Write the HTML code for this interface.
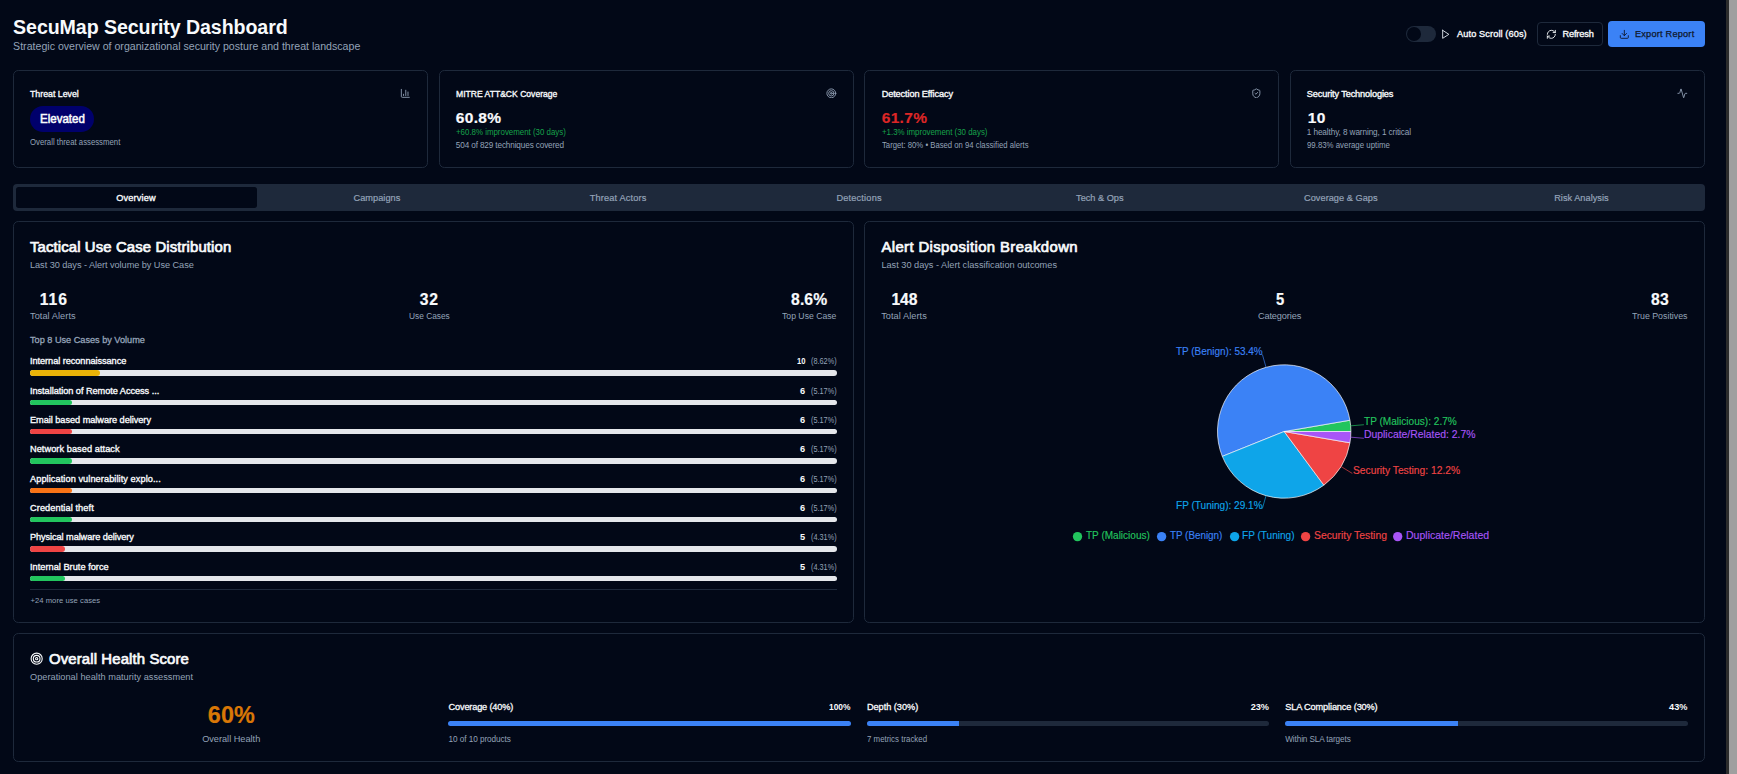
<!DOCTYPE html>
<html><head><meta charset="utf-8"><title>SecuMap Security Dashboard</title>
<style>html,body{margin:0;padding:0}body{width:1737px;height:774px;background:#020817;overflow:hidden;position:relative;font-family:"Liberation Sans",sans-serif;}.t{position:absolute;white-space:pre;}</style></head>
<body>
<div style="position:absolute;box-sizing:border-box;border:1px solid #1e293b;border-radius:5.3px;left:13px;top:70px;width:415px;height:98px"></div>
<div style="position:absolute;box-sizing:border-box;border:1px solid #1e293b;border-radius:5.3px;left:439px;top:70px;width:415px;height:98px"></div>
<div style="position:absolute;box-sizing:border-box;border:1px solid #1e293b;border-radius:5.3px;left:864px;top:70px;width:415px;height:98px"></div>
<div style="position:absolute;box-sizing:border-box;border:1px solid #1e293b;border-radius:5.3px;left:1290px;top:70px;width:415px;height:98px"></div>
<div style="position:absolute;left:13px;top:184px;width:1692px;height:27px;background:#1e293b;border-radius:4px"></div>
<div style="position:absolute;left:16px;top:187px;width:241px;height:21px;background:#020817;border-radius:2.7px"></div>
<div style="position:absolute;box-sizing:border-box;border:1px solid #1e293b;border-radius:5.3px;left:13px;top:221px;width:841px;height:402px"></div>
<div style="position:absolute;box-sizing:border-box;border:1px solid #1e293b;border-radius:5.3px;left:864px;top:221px;width:841px;height:402px"></div>
<div style="position:absolute;box-sizing:border-box;border:1px solid #1e293b;border-radius:5.3px;left:13px;top:633px;width:1692px;height:129px"></div>
<div style="position:absolute;left:1726px;top:0;width:11px;height:774px;background:#2c2c2c"></div>
<div style="position:absolute;left:1729px;top:0;width:8px;height:774px;background:#9f9f9f"></div>
<div style="position:absolute;left:1406px;top:26px;width:29.8px;height:16px;border-radius:8px;background:#1e293b"></div>
<div style="position:absolute;left:1407px;top:27px;width:14px;height:14px;border-radius:7px;background:#020817"></div>
<div style="position:absolute;box-sizing:border-box;left:1537px;top:22px;width:66px;height:24px;border:1px solid #1e293b;border-radius:4px"></div>
<div style="position:absolute;left:1608px;top:21px;width:97px;height:26px;border-radius:4px;background:#3b82f6"></div>
<div style="position:absolute;left:30px;top:106px;width:64px;height:26px;border-radius:13px;background:#00006b"></div>
<div style="position:absolute;left:30px;top:370.30px;width:807px;height:5.33px;border-radius:3px;background:#e5e7eb"></div>
<div style="position:absolute;left:30px;top:370.30px;width:69.6px;height:5.33px;border-radius:3px;background:#eab308"></div>
<div style="position:absolute;left:30px;top:399.63px;width:807px;height:5.33px;border-radius:3px;background:#e5e7eb"></div>
<div style="position:absolute;left:30px;top:399.63px;width:41.7px;height:5.33px;border-radius:3px;background:#22c55e"></div>
<div style="position:absolute;left:30px;top:428.97px;width:807px;height:5.33px;border-radius:3px;background:#e5e7eb"></div>
<div style="position:absolute;left:30px;top:428.97px;width:41.7px;height:5.33px;border-radius:3px;background:#ef4444"></div>
<div style="position:absolute;left:30px;top:458.30px;width:807px;height:5.33px;border-radius:3px;background:#e5e7eb"></div>
<div style="position:absolute;left:30px;top:458.30px;width:41.7px;height:5.33px;border-radius:3px;background:#22c55e"></div>
<div style="position:absolute;left:30px;top:487.63px;width:807px;height:5.33px;border-radius:3px;background:#e5e7eb"></div>
<div style="position:absolute;left:30px;top:487.63px;width:41.7px;height:5.33px;border-radius:3px;background:#f97316"></div>
<div style="position:absolute;left:30px;top:516.97px;width:807px;height:5.33px;border-radius:3px;background:#e5e7eb"></div>
<div style="position:absolute;left:30px;top:516.97px;width:41.7px;height:5.33px;border-radius:3px;background:#22c55e"></div>
<div style="position:absolute;left:30px;top:546.30px;width:807px;height:5.33px;border-radius:3px;background:#e5e7eb"></div>
<div style="position:absolute;left:30px;top:546.30px;width:34.8px;height:5.33px;border-radius:3px;background:#ef4444"></div>
<div style="position:absolute;left:30px;top:575.63px;width:807px;height:5.33px;border-radius:3px;background:#e5e7eb"></div>
<div style="position:absolute;left:30px;top:575.63px;width:34.8px;height:5.33px;border-radius:3px;background:#22c55e"></div>
<div style="position:absolute;left:30px;top:589px;width:807px;height:1px;background:#1e293b"></div>
<div style="position:absolute;left:448.4px;top:720.7px;width:402.6px;height:5.33px;border-radius:3px;background:#1e293b;overflow:hidden"><div style="width:402.6px;height:100%;background:#3b82f6"></div></div>
<div style="position:absolute;left:866.8px;top:720.7px;width:402.6px;height:5.33px;border-radius:3px;background:#1e293b;overflow:hidden"><div style="width:92.6px;height:100%;background:#3b82f6"></div></div>
<div style="position:absolute;left:1285.2px;top:720.7px;width:402.6px;height:5.33px;border-radius:3px;background:#1e293b;overflow:hidden"><div style="width:173.1px;height:100%;background:#3b82f6"></div></div>
<svg style="position:absolute;left:0;top:0" width="1737" height="774" viewBox="0 0 1737 774">
<path d="M1284.20 431.50 L1350.90 431.50 A66.70 66.70 0 0 0 1349.94 420.23 Z" fill="#22c55e" stroke="#fff" stroke-width="0.67" stroke-linejoin="round"/>
<path d="M1350.66 425.84 L1363.91 424.72" stroke="#22c55e" stroke-width="0.67" fill="none"/>
<path d="M1284.20 431.50 L1349.94 420.23 A66.70 66.70 0 1 0 1222.31 456.37 Z" fill="#3b82f6" stroke="#fff" stroke-width="0.67" stroke-linejoin="round"/>
<path d="M1266.03 367.32 L1262.40 354.53" stroke="#3b82f6" stroke-width="0.67" fill="none"/>
<path d="M1284.20 431.50 L1222.31 456.37 A66.70 66.70 0 0 0 1323.86 485.13 Z" fill="#0ea5e9" stroke="#fff" stroke-width="0.67" stroke-linejoin="round"/>
<path d="M1266.03 495.68 L1262.40 508.47" stroke="#0ea5e9" stroke-width="0.67" fill="none"/>
<path d="M1284.20 431.50 L1323.86 485.13 A66.70 66.70 0 0 0 1349.94 442.77 Z" fill="#ef4444" stroke="#fff" stroke-width="0.67" stroke-linejoin="round"/>
<path d="M1341.00 466.47 L1352.32 473.44" stroke="#ef4444" stroke-width="0.67" fill="none"/>
<path d="M1284.20 431.50 L1349.94 442.77 A66.70 66.70 0 0 0 1350.90 431.50 Z" fill="#a855f7" stroke="#fff" stroke-width="0.67" stroke-linejoin="round"/>
<path d="M1350.66 437.16 L1363.91 438.28" stroke="#a855f7" stroke-width="0.67" fill="none"/>
<circle cx="1077.5" cy="536.6" r="4.67" fill="#22c55e"/>
<circle cx="1161.6" cy="536.6" r="4.67" fill="#3b82f6"/>
<circle cx="1234.6" cy="536.6" r="4.67" fill="#0ea5e9"/>
<circle cx="1305.6" cy="536.6" r="4.67" fill="#ef4444"/>
<circle cx="1397.7" cy="536.6" r="4.67" fill="#a855f7"/>
</svg>
<svg style="position:absolute;left:399.90px;top:88.00px" width="10.67" height="10.67" viewBox="0 0 24 24" fill="none" stroke="#94a3b8" stroke-width="2" stroke-linecap="round" stroke-linejoin="round"><path d="M3 3v16a2 2 0 0 0 2 2h16"/><path d="M18 17V9"/><path d="M13 17V5"/><path d="M8 17v-3"/></svg>
<svg style="position:absolute;left:825.90px;top:87.80px" width="10.67" height="10.67" viewBox="0 0 24 24" fill="none" stroke="#94a3b8" stroke-width="2" stroke-linecap="round" stroke-linejoin="round"><circle cx="12" cy="12" r="10"/><circle cx="12" cy="12" r="6"/><circle cx="12" cy="12" r="2"/></svg>
<svg style="position:absolute;left:1250.90px;top:87.80px" width="10.67" height="10.67" viewBox="0 0 24 24" fill="none" stroke="#94a3b8" stroke-width="2" stroke-linecap="round" stroke-linejoin="round"><path d="M20 13c0 5-3.5 7.500-7.660 8.950a1 1 0 0 1-.670-.010C7.500 20.500 4 18 4 13V6a1 1 0 0 1 1-1c2 0 4.500-1.200 6.240-2.720a1.170 1.170 0 0 1 1.520 0C14.510 3.810 17 5 19 5a1 1 0 0 1 1 1z"/><path d="m9 12 2 2 4-4"/></svg>
<svg style="position:absolute;left:1677.00px;top:87.80px" width="10.67" height="10.67" viewBox="0 0 24 24" fill="none" stroke="#94a3b8" stroke-width="2" stroke-linecap="round" stroke-linejoin="round"><path d="M22 12h-2.480a2 2 0 0 0-1.930 1.460l-2.350 8.360a.25.25 0 0 1-.480 0L9.240 2.180a.25.25 0 0 0-.480 0l-2.350 8.360A2 2 0 0 1 4.490 12H2"/></svg>
<svg style="position:absolute;left:1440.00px;top:29.00px" width="10.67" height="10.67" viewBox="0 0 24 24" fill="none" stroke="#e2e8f0" stroke-width="2" stroke-linecap="round" stroke-linejoin="round"><polygon points="6 3 20 12 6 21 6 3"/></svg>
<svg style="position:absolute;left:1546.20px;top:28.60px" width="10.67" height="10.67" viewBox="0 0 24 24" fill="none" stroke="#f8fafc" stroke-width="2" stroke-linecap="round" stroke-linejoin="round"><path d="M3 12a9 9 0 0 1 9-9 9.750 9.750 0 0 1 6.740 2.740L21 8"/><path d="M21 3v5h-5"/><path d="M21 12a9 9 0 0 1-9 9 9.750 9.750 0 0 1-6.740-2.740L3 16"/><path d="M8 16H3v5"/></svg>
<svg style="position:absolute;left:1619.20px;top:28.60px" width="10.67" height="10.67" viewBox="0 0 24 24" fill="none" stroke="#0f172a" stroke-width="2" stroke-linecap="round" stroke-linejoin="round"><path d="M21 15v4a2 2 0 0 1-2 2H5a2 2 0 0 1-2-2v-4"/><polyline points="7 10 12 15 17 10"/><line x1="12" x2="12" y1="15" y2="3"/></svg>
<svg style="position:absolute;left:29.90px;top:652.00px" width="13.33" height="13.33" viewBox="0 0 24 24" fill="none" stroke="#f8fafc" stroke-width="2" stroke-linecap="round" stroke-linejoin="round"><circle cx="12" cy="12" r="10"/><circle cx="12" cy="12" r="6"/><circle cx="12" cy="12" r="2"/></svg>
<div class="t" style="left:13.10px;top:16px;font-size:19.6px;line-height:22px;height:22px;letter-spacing:-0.079px;color:#f8fafc;font-weight:700;">SecuMap Security Dashboard</div>
<div class="t" style="left:13.10px;top:40px;font-size:10.6px;line-height:12px;height:12px;letter-spacing:0.005px;color:#94a3b8;">Strategic overview of organizational security posture and threat landscape</div>
<div class="t" style="left:1457.10px;top:29px;font-size:9.2px;line-height:10px;height:10px;letter-spacing:0.105px;color:#f8fafc;-webkit-text-stroke:0.35px #f8fafc;">Auto Scroll (60s)</div>
<div class="t" style="left:1562.50px;top:29px;font-size:9.2px;line-height:10px;height:10px;letter-spacing:-0.145px;color:#f8fafc;-webkit-text-stroke:0.35px #f8fafc;">Refresh</div>
<div class="t" style="left:1634.90px;top:29px;font-size:9.2px;line-height:10px;height:10px;letter-spacing:0.218px;color:#0f172a;-webkit-text-stroke:0.25px #0f172a;">Export Report</div>
<div class="t" style="left:30.10px;top:89px;font-size:9.2px;line-height:10px;height:10px;transform:scaleX(0.9554);transform-origin:0 0;color:#f8fafc;-webkit-text-stroke:0.35px #f8fafc;">Threat Level</div>
<div class="t" style="left:39.60px;top:112px;font-size:12.0px;line-height:14px;height:14px;transform:scaleX(0.9593);transform-origin:0 0;color:#f8fafc;-webkit-text-stroke:0.55px #f8fafc;">Elevated</div>
<div class="t" style="left:30.00px;top:138px;font-size:8.2px;line-height:9px;height:9px;transform:scaleX(0.9494);transform-origin:0 0;color:#94a3b8;">Overall threat assessment</div>
<div class="t" style="left:455.80px;top:89px;font-size:9.2px;line-height:10px;height:10px;transform:scaleX(0.9330);transform-origin:0 0;color:#f8fafc;-webkit-text-stroke:0.35px #f8fafc;">MITRE ATT&amp;CK Coverage</div>
<div class="t" style="left:455.80px;top:109px;font-size:15.5px;line-height:17px;height:17px;letter-spacing:0.312px;color:#f8fafc;font-weight:700;-webkit-text-stroke:0.2px #f8fafc;">60.8%</div>
<div class="t" style="left:455.80px;top:128px;font-size:8.2px;line-height:9px;height:9px;transform:scaleX(0.9632);transform-origin:0 0;color:#16a34a;">+60.8% improvement (30 days)</div>
<div class="t" style="left:455.80px;top:141px;font-size:8.2px;line-height:9px;height:9px;letter-spacing:-0.132px;color:#94a3b8;">504 of 829 techniques covered</div>
<div class="t" style="left:881.70px;top:89px;font-size:9.2px;line-height:10px;height:10px;letter-spacing:-0.122px;color:#f8fafc;-webkit-text-stroke:0.35px #f8fafc;">Detection Efficacy</div>
<div class="t" style="left:881.70px;top:109px;font-size:15.5px;line-height:17px;height:17px;letter-spacing:0.337px;color:#dc2626;font-weight:700;-webkit-text-stroke:0.2px #dc2626;">61.7%</div>
<div class="t" style="left:881.70px;top:128px;font-size:8.2px;line-height:9px;height:9px;transform:scaleX(0.9639);transform-origin:0 0;color:#16a34a;">+1.3% improvement (30 days)</div>
<div class="t" style="left:881.70px;top:141px;font-size:8.2px;line-height:9px;height:9px;transform:scaleX(0.9437);transform-origin:0 0;color:#94a3b8;">Target: 80% • Based on 94 classified alerts</div>
<div class="t" style="left:1306.80px;top:89px;font-size:9.2px;line-height:10px;height:10px;letter-spacing:-0.131px;color:#f8fafc;-webkit-text-stroke:0.35px #f8fafc;">Security Technologies</div>
<div class="t" style="left:1307.70px;top:109px;font-size:15.5px;line-height:17px;height:17px;letter-spacing:0.450px;color:#f8fafc;font-weight:700;-webkit-text-stroke:0.2px #f8fafc;">10</div>
<div class="t" style="left:1306.80px;top:128px;font-size:8.2px;line-height:9px;height:9px;letter-spacing:-0.095px;color:#94a3b8;">1 healthy, 8 warning, 1 critical</div>
<div class="t" style="left:1306.80px;top:141px;font-size:8.2px;line-height:9px;height:9px;transform:scaleX(0.9574);transform-origin:0 0;color:#94a3b8;">99.83% average uptime</div>
<div class="t" style="left:116.25px;top:193px;font-size:9.2px;line-height:10px;height:10px;letter-spacing:0.172px;color:#f8fafc;-webkit-text-stroke:0.35px #f8fafc;">Overview</div>
<div class="t" style="left:353.50px;top:193px;font-size:9.2px;line-height:10px;height:10px;letter-spacing:0.039px;color:#94a3b8;-webkit-text-stroke:0.2px #94a3b8;">Campaigns</div>
<div class="t" style="left:589.75px;top:193px;font-size:9.2px;line-height:10px;height:10px;letter-spacing:0.155px;color:#94a3b8;-webkit-text-stroke:0.2px #94a3b8;">Threat Actors</div>
<div class="t" style="left:836.45px;top:193px;font-size:9.2px;line-height:10px;height:10px;letter-spacing:0.186px;color:#94a3b8;-webkit-text-stroke:0.2px #94a3b8;">Detections</div>
<div class="t" style="left:1076.10px;top:193px;font-size:9.2px;line-height:10px;height:10px;letter-spacing:-0.011px;color:#94a3b8;-webkit-text-stroke:0.2px #94a3b8;">Tech &amp; Ops</div>
<div class="t" style="left:1304.05px;top:193px;font-size:9.2px;line-height:10px;height:10px;letter-spacing:0.033px;color:#94a3b8;-webkit-text-stroke:0.2px #94a3b8;">Coverage &amp; Gaps</div>
<div class="t" style="left:1554.15px;top:193px;font-size:9.2px;line-height:10px;height:10px;letter-spacing:0.031px;color:#94a3b8;-webkit-text-stroke:0.2px #94a3b8;">Risk Analysis</div>
<div class="t" style="left:30.00px;top:239px;font-size:14.9px;line-height:16px;height:16px;letter-spacing:0.117px;color:#f8fafc;-webkit-text-stroke:0.7px #f8fafc;">Tactical Use Case Distribution</div>
<div class="t" style="left:30.00px;top:260px;font-size:9.2px;line-height:10px;height:10px;letter-spacing:-0.057px;color:#94a3b8;">Last 30 days - Alert volume by Use Case</div>
<div class="t" style="left:39.70px;top:291px;font-size:15.7px;line-height:17px;height:17px;letter-spacing:1.044px;color:#f8fafc;font-weight:700;-webkit-text-stroke:0.2px #f8fafc;">116</div>
<div class="t" style="left:30.00px;top:311px;font-size:9.2px;line-height:10px;height:10px;letter-spacing:0.060px;color:#94a3b8;">Total Alerts</div>
<div class="t" style="left:419.80px;top:291px;font-size:15.7px;line-height:17px;height:17px;letter-spacing:0.847px;color:#f8fafc;font-weight:700;-webkit-text-stroke:0.2px #f8fafc;">32</div>
<div class="t" style="left:408.50px;top:311px;font-size:9.2px;line-height:10px;height:10px;transform:scaleX(0.9079);transform-origin:0 0;color:#94a3b8;">Use Cases</div>
<div class="t" style="left:791.05px;top:291px;font-size:15.7px;line-height:17px;height:17px;letter-spacing:0.111px;color:#f8fafc;font-weight:700;-webkit-text-stroke:0.2px #f8fafc;">8.6%</div>
<div class="t" style="left:781.80px;top:311px;font-size:9.2px;line-height:10px;height:10px;transform:scaleX(0.9428);transform-origin:0 0;color:#94a3b8;">Top Use Case</div>
<div class="t" style="left:30.00px;top:335px;font-size:9.2px;line-height:10px;height:10px;letter-spacing:-0.022px;color:#94a3b8;-webkit-text-stroke:0.3px #94a3b8;">Top 8 Use Cases by Volume</div>
<div class="t" style="left:30.00px;top:356px;font-size:9.2px;line-height:10px;height:10px;letter-spacing:-0.057px;color:#f8fafc;-webkit-text-stroke:0.35px #f8fafc;">Internal reconnaissance</div>
<div class="t" style="left:796.60px;top:356px;font-size:9.2px;line-height:10px;height:10px;transform:scaleX(0.8305);transform-origin:0 0;color:#f8fafc;font-weight:700;">10</div>
<div class="t" style="left:810.80px;top:357px;font-size:8.2px;line-height:9px;height:9px;transform:scaleX(0.8929);transform-origin:0 0;color:#94a3b8;">(8.62%)</div>
<div class="t" style="left:30.00px;top:386px;font-size:9.2px;line-height:10px;height:10px;letter-spacing:-0.048px;color:#f8fafc;-webkit-text-stroke:0.35px #f8fafc;">Installation of Remote Access ...</div>
<div class="t" style="left:799.90px;top:386px;font-size:9.2px;line-height:10px;height:10px;letter-spacing:0.000px;color:#f8fafc;font-weight:700;">6</div>
<div class="t" style="left:810.80px;top:387px;font-size:8.2px;line-height:9px;height:9px;transform:scaleX(0.8929);transform-origin:0 0;color:#94a3b8;">(5.17%)</div>
<div class="t" style="left:30.00px;top:415px;font-size:9.2px;line-height:10px;height:10px;letter-spacing:-0.039px;color:#f8fafc;-webkit-text-stroke:0.35px #f8fafc;">Email based malware delivery</div>
<div class="t" style="left:799.90px;top:415px;font-size:9.2px;line-height:10px;height:10px;letter-spacing:0.000px;color:#f8fafc;font-weight:700;">6</div>
<div class="t" style="left:810.80px;top:416px;font-size:8.2px;line-height:9px;height:9px;transform:scaleX(0.8929);transform-origin:0 0;color:#94a3b8;">(5.17%)</div>
<div class="t" style="left:30.00px;top:444px;font-size:9.2px;line-height:10px;height:10px;letter-spacing:0.065px;color:#f8fafc;-webkit-text-stroke:0.35px #f8fafc;">Network based attack</div>
<div class="t" style="left:799.90px;top:444px;font-size:9.2px;line-height:10px;height:10px;letter-spacing:0.000px;color:#f8fafc;font-weight:700;">6</div>
<div class="t" style="left:810.80px;top:445px;font-size:8.2px;line-height:9px;height:9px;transform:scaleX(0.8929);transform-origin:0 0;color:#94a3b8;">(5.17%)</div>
<div class="t" style="left:30.00px;top:474px;font-size:9.2px;line-height:10px;height:10px;letter-spacing:0.079px;color:#f8fafc;-webkit-text-stroke:0.35px #f8fafc;">Application vulnerability explo...</div>
<div class="t" style="left:799.90px;top:474px;font-size:9.2px;line-height:10px;height:10px;letter-spacing:0.000px;color:#f8fafc;font-weight:700;">6</div>
<div class="t" style="left:810.80px;top:475px;font-size:8.2px;line-height:9px;height:9px;transform:scaleX(0.8929);transform-origin:0 0;color:#94a3b8;">(5.17%)</div>
<div class="t" style="left:30.00px;top:503px;font-size:9.2px;line-height:10px;height:10px;letter-spacing:0.093px;color:#f8fafc;-webkit-text-stroke:0.35px #f8fafc;">Credential theft</div>
<div class="t" style="left:799.90px;top:503px;font-size:9.2px;line-height:10px;height:10px;letter-spacing:0.000px;color:#f8fafc;font-weight:700;">6</div>
<div class="t" style="left:810.80px;top:504px;font-size:8.2px;line-height:9px;height:9px;transform:scaleX(0.8929);transform-origin:0 0;color:#94a3b8;">(5.17%)</div>
<div class="t" style="left:30.00px;top:532px;font-size:9.2px;line-height:10px;height:10px;letter-spacing:-0.079px;color:#f8fafc;-webkit-text-stroke:0.35px #f8fafc;">Physical malware delivery</div>
<div class="t" style="left:799.90px;top:532px;font-size:9.2px;line-height:10px;height:10px;letter-spacing:0.000px;color:#f8fafc;font-weight:700;">5</div>
<div class="t" style="left:810.80px;top:533px;font-size:8.2px;line-height:9px;height:9px;transform:scaleX(0.8929);transform-origin:0 0;color:#94a3b8;">(4.31%)</div>
<div class="t" style="left:30.00px;top:562px;font-size:9.2px;line-height:10px;height:10px;letter-spacing:0.029px;color:#f8fafc;-webkit-text-stroke:0.35px #f8fafc;">Internal Brute force</div>
<div class="t" style="left:799.90px;top:562px;font-size:9.2px;line-height:10px;height:10px;letter-spacing:0.000px;color:#f8fafc;font-weight:700;">5</div>
<div class="t" style="left:810.80px;top:563px;font-size:8.2px;line-height:9px;height:9px;transform:scaleX(0.8929);transform-origin:0 0;color:#94a3b8;">(4.31%)</div>
<div class="t" style="left:30.50px;top:596px;font-size:7.6px;line-height:9px;height:9px;letter-spacing:0.059px;color:#94a3b8;">+24 more use cases</div>
<div class="t" style="left:881.40px;top:239px;font-size:14.9px;line-height:16px;height:16px;letter-spacing:0.383px;color:#f8fafc;-webkit-text-stroke:0.7px #f8fafc;">Alert Disposition Breakdown</div>
<div class="t" style="left:881.40px;top:260px;font-size:9.2px;line-height:10px;height:10px;letter-spacing:-0.002px;color:#94a3b8;">Last 30 days - Alert classification outcomes</div>
<div class="t" style="left:891.45px;top:291px;font-size:15.7px;line-height:17px;height:17px;letter-spacing:-0.044px;color:#f8fafc;font-weight:700;-webkit-text-stroke:0.2px #f8fafc;">148</div>
<div class="t" style="left:881.20px;top:311px;font-size:9.2px;line-height:10px;height:10px;letter-spacing:0.060px;color:#94a3b8;">Total Alerts</div>
<div class="t" style="left:1275.60px;top:291px;font-size:15.7px;line-height:17px;height:17px;transform:scaleX(0.9388);transform-origin:0 0;color:#f8fafc;font-weight:700;-webkit-text-stroke:0.2px #f8fafc;">5</div>
<div class="t" style="left:1257.95px;top:311px;font-size:9.2px;line-height:10px;height:10px;letter-spacing:-0.126px;color:#94a3b8;">Categories</div>
<div class="t" style="left:1651.05px;top:291px;font-size:15.7px;line-height:17px;height:17px;letter-spacing:0.247px;color:#f8fafc;font-weight:700;-webkit-text-stroke:0.2px #f8fafc;">83</div>
<div class="t" style="left:1632.15px;top:311px;font-size:9.2px;line-height:10px;height:10px;transform:scaleX(0.9590);transform-origin:0 0;color:#94a3b8;">True Positives</div>
<div class="t" style="left:1175.50px;top:345px;font-size:11.0px;line-height:12px;height:12px;transform:scaleX(0.9040);transform-origin:0 0;color:#3b82f6;-webkit-text-stroke:0.15px #3b82f6;">TP (Benign): 53.4%</div>
<div class="t" style="left:1364.20px;top:415px;font-size:11.0px;line-height:12px;height:12px;transform:scaleX(0.9163);transform-origin:0 0;color:#22c55e;-webkit-text-stroke:0.15px #22c55e;">TP (Malicious): 2.7%</div>
<div class="t" style="left:1364.20px;top:428px;font-size:11.0px;line-height:12px;height:12px;transform:scaleX(0.9448);transform-origin:0 0;color:#a855f7;-webkit-text-stroke:0.15px #a855f7;">Duplicate/Related: 2.7%</div>
<div class="t" style="left:1352.70px;top:464px;font-size:11.0px;line-height:12px;height:12px;transform:scaleX(0.9333);transform-origin:0 0;color:#ef4444;-webkit-text-stroke:0.15px #ef4444;">Security Testing: 12.2%</div>
<div class="t" style="left:1176.10px;top:499px;font-size:11.0px;line-height:12px;height:12px;transform:scaleX(0.9137);transform-origin:0 0;color:#0ea5e9;-webkit-text-stroke:0.15px #0ea5e9;">FP (Tuning): 29.1%</div>
<div class="t" style="left:1086.30px;top:529px;font-size:11.0px;line-height:12px;height:12px;transform:scaleX(0.9102);transform-origin:0 0;color:#22c55e;-webkit-text-stroke:0.15px #22c55e;">TP (Malicious)</div>
<div class="t" style="left:1170.10px;top:529px;font-size:11.0px;line-height:12px;height:12px;transform:scaleX(0.8940);transform-origin:0 0;color:#3b82f6;-webkit-text-stroke:0.15px #3b82f6;">TP (Benign)</div>
<div class="t" style="left:1241.70px;top:529px;font-size:11.0px;line-height:12px;height:12px;transform:scaleX(0.9135);transform-origin:0 0;color:#0ea5e9;-webkit-text-stroke:0.15px #0ea5e9;">FP (Tuning)</div>
<div class="t" style="left:1313.90px;top:529px;font-size:11.0px;line-height:12px;height:12px;transform:scaleX(0.9412);transform-origin:0 0;color:#ef4444;-webkit-text-stroke:0.15px #ef4444;">Security Testing</div>
<div class="t" style="left:1405.60px;top:529px;font-size:11.0px;line-height:12px;height:12px;transform:scaleX(0.9569);transform-origin:0 0;color:#a855f7;-webkit-text-stroke:0.15px #a855f7;">Duplicate/Related</div>
<div class="t" style="left:49.00px;top:651px;font-size:14.9px;line-height:16px;height:16px;letter-spacing:0.132px;color:#f8fafc;-webkit-text-stroke:0.7px #f8fafc;">Overall Health Score</div>
<div class="t" style="left:30.00px;top:672px;font-size:9.2px;line-height:10px;height:10px;letter-spacing:0.030px;color:#94a3b8;">Operational health maturity assessment</div>
<div class="t" style="left:207.80px;top:702px;font-size:23.4px;line-height:26px;height:26px;letter-spacing:0.086px;color:#d97706;font-weight:700;-webkit-text-stroke:0.2px #d97706;">60%</div>
<div class="t" style="left:202.15px;top:734px;font-size:9.2px;line-height:10px;height:10px;letter-spacing:-0.009px;color:#94a3b8;">Overall Health</div>
<div class="t" style="left:448.60px;top:702px;font-size:9.2px;line-height:10px;height:10px;letter-spacing:-0.177px;color:#f8fafc;-webkit-text-stroke:0.3px #f8fafc;">Coverage (40%)</div>
<div class="t" style="left:828.90px;top:702px;font-size:9.2px;line-height:10px;height:10px;transform:scaleX(0.9149);transform-origin:0 0;color:#f8fafc;font-weight:700;">100%</div>
<div class="t" style="left:448.60px;top:735px;font-size:8.2px;line-height:9px;height:9px;letter-spacing:-0.061px;color:#94a3b8;">10 of 10 products</div>
<div class="t" style="left:866.90px;top:702px;font-size:9.2px;line-height:10px;height:10px;letter-spacing:-0.028px;color:#f8fafc;-webkit-text-stroke:0.3px #f8fafc;">Depth (30%)</div>
<div class="t" style="left:1250.80px;top:702px;font-size:9.2px;line-height:10px;height:10px;letter-spacing:-0.095px;color:#f8fafc;font-weight:700;">23%</div>
<div class="t" style="left:866.90px;top:735px;font-size:8.2px;line-height:9px;height:9px;transform:scaleX(0.9640);transform-origin:0 0;color:#94a3b8;">7 metrics tracked</div>
<div class="t" style="left:1285.20px;top:702px;font-size:9.2px;line-height:10px;height:10px;letter-spacing:-0.131px;color:#f8fafc;-webkit-text-stroke:0.3px #f8fafc;">SLA Compliance (30%)</div>
<div class="t" style="left:1669.10px;top:702px;font-size:9.2px;line-height:10px;height:10px;letter-spacing:-0.045px;color:#f8fafc;font-weight:700;">43%</div>
<div class="t" style="left:1285.20px;top:735px;font-size:8.2px;line-height:9px;height:9px;letter-spacing:-0.103px;color:#94a3b8;">Within SLA targets</div>
</body></html>
